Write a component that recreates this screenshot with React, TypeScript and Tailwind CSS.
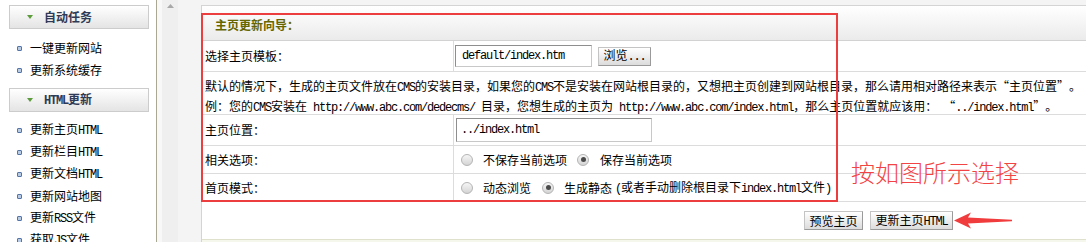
import React from 'react';

// latin runs: the page was drawn with a half-width font, 6px per char
const L = ({ children }: { children: React.ReactNode }) => (
  <span className="font-['Liberation_Mono'] tracking-[-1.2px]">{children}</span>
);

const Q = ({ children, right }: { children: React.ReactNode; right?: boolean }) => (
  <span className={`inline-block w-[12px] ${right ? 'text-left' : 'text-right'}`}>{children}</span>
);

const SideHead = ({ children, top }: { children: React.ReactNode; top: string }) => (
  <div
    className={`${top} ml-[9px] w-[140px] h-[24px] border border-[#cccccc] bg-linear-to-b from-white to-[#e4e4e4] flex items-center`}
  >
    <svg width="6" height="4" viewBox="0 0 6 4" className="ml-[17px]">
      <path d="M0 0 L6 0 L3 4 Z" fill="#5c9c3c" />
    </svg>
    <span className="ml-[11px] font-bold text-[#2e3a56]">{children}</span>
  </div>
);

const Item = ({ children }: { children: React.ReactNode }) => (
  <li className="flex items-center h-[22px] pl-[17px]">
    <span className="w-[5px] h-[5px] rounded-[1px] border border-[#5674a4] bg-[#b8cce8] mr-[8px]" />
    <span>{children}</span>
  </li>
);

const Radio = ({ checked }: { checked?: boolean }) => (
  <span className="w-[12px] h-[12px] rounded-full border border-[#b4b4b4] bg-linear-to-b from-[#f6f6f6] to-[#d4d4d4] flex items-center justify-center shrink-0">
    {checked && <span className="w-[5px] h-[5px] rounded-full bg-[#4a4a4a]" />}
  </span>
);

const Btn = ({ children, className = '' }: { children: React.ReactNode; className?: string }) => (
  <button
    className={`h-[19px] px-[4px] border border-[#c4c4c4] border-r-[#9a9a9a] border-b-[#9a9a9a] bg-linear-to-b from-white to-[#dcdcdc] text-black leading-none ${className}`}
  >
    {children}
  </button>
);

const Row = ({ label, h, children }: { label: React.ReactNode; h: string; children: React.ReactNode }) => (
  <div className={`flex ${h} border-b border-[#dcdcdc]`}>
    <div className="w-[252px] shrink-0 border-r border-[#dcdcdc] pl-[3px] flex items-center">{label}</div>
    <div className="flex-1 flex items-center">{children}</div>
  </div>
);

export default function App() {
  return (
    <div className="relative w-[1086px] h-[242px] overflow-hidden flex bg-white text-[12px] leading-[18px] text-black font-['Noto_Sans_CJK_SC',sans-serif]">
      {/* left menu */}
      <div className="w-[157px] shrink-0 border-r border-[#a9a993] bg-white">
        <SideHead top="mt-[5px]">自动任务</SideHead>
        <ul className="mt-[8px]">
          <Item>一键更新网站</Item>
          <Item>更新系统缓存</Item>
        </ul>
        <SideHead top="mt-[7px]">
          <L>HTML</L>更新
        </SideHead>
        <ul className="mt-[7px]">
          <Item>
            更新主页<L>HTML</L>
          </Item>
          <Item>
            更新栏目<L>HTML</L>
          </Item>
          <Item>
            更新文档<L>HTML</L>
          </Item>
          <Item>更新网站地图</Item>
          <Item>
            更新<L>RSS</L>文件
          </Item>
          <Item>
            获取<L>JS</L>文件
          </Item>
        </ul>
      </div>

      {/* splitter strip */}
      <div className="w-[5px] shrink-0 bg-[#f8f8f8]" />
      <div className="w-[16px] shrink-0 bg-[#efefef] flex justify-center pt-[4px]">
        <svg width="7" height="4" viewBox="0 0 7 4">
          <path d="M0 4 L3.5 0 L7 4 Z" fill="#a8a8a8" />
        </svg>
      </div>
      <div className="w-[23px] shrink-0 bg-[#f4f4f4]" />

      {/* main */}
      <div className="flex-1 bg-[#f4f4f4] pt-[5px] min-w-0">
        <div className="bg-white border-t border-l border-[#d4d4d4] w-[1200px]">
          <div className="h-[35px] border-b border-[#d2d2d2] bg-linear-to-b from-white to-[#ebebeb] flex items-center pl-[13px] pt-[3px]">
            <span className="font-bold text-[#666600]">主页更新向导：</span>
          </div>

          <Row h="h-[31px]" label="选择主页模板：">
            <div className="ml-[1px] w-[137px] h-[22px] border border-[#c8c8c8] border-t-[#8e8e8e] border-l-[#8e8e8e] pl-[6px] flex items-center">
              <L>default/index.htm</L>
            </div>
            <Btn className="ml-[6px] w-[53px]">
              浏览<L>...</L>
            </Btn>
          </Row>

          <div className="h-[43px] border-b border-[#dcdcdc] pl-[3px] pt-[5px] whitespace-nowrap">
            <div>
              默认的情况下，生成的主页文件放在<L>CMS</L>的安装目录，如果您的<L>CMS</L>
              不是安装在网站根目录的，又想把主页创建到网站根目录，那么请用相对路径来表示<Q>“</Q>主页位置<Q right>”</Q>。
            </div>
            <div>
              例：您的<L>CMS</L>安装在<L> http://www.abc.com/dedecms/ </L>目录，您想生成的主页为
              <L> http://www.abc.com/index.html</L>，那么主页位置就应该用：<L>  </L>
              <Q>“</Q>
              <L>../index.html</L>
              <Q right>”</Q>。
            </div>
          </div>

          <Row h="h-[31px]" label="主页位置：">
            <div className="ml-[2px] w-[196px] h-[24px] border border-[#c8c8c8] border-t-[#8e8e8e] border-l-[#8e8e8e] pl-[4px] flex items-center">
              <L>../index.html</L>
            </div>
          </Row>

          <Row h="h-[28px]" label="相关选项：">
            <span className="ml-[7px]">
              <Radio />
            </span>
            <span className="ml-[10px]">不保存当前选项</span>
            <span className="ml-[10px]">
              <Radio checked />
            </span>
            <span className="ml-[11px]">保存当前选项</span>
          </Row>

          <Row h="h-[28px]" label="首页模式：">
            <span className="ml-[7px]">
              <Radio />
            </span>
            <span className="ml-[10px]">动态浏览</span>
            <span className="ml-[11px]">
              <Radio checked />
            </span>
            <span className="ml-[10px]">生成静态</span>
            <span className="ml-[3px]">
              <L>(</L>或者手动删除根目录下<L>index.html</L>文件<L>)</L>
            </span>
          </Row>

          <div className="h-[37px] flex items-center pl-[602px] gap-[7px]">
            <Btn className="w-[59px]">预览主页</Btn>
            <Btn className="w-[83px]">
              更新主页<L>HTML</L>
            </Btn>
          </div>
          <div className="h-[10px] border-t border-[#dfe1cc] bg-[#f6f7ec]" />
        </div>
      </div>

      {/* annotations drawn over the screenshot */}
      <div className="absolute left-[201px] top-[13px] w-[637px] h-[189px] border-2 border-[#ec3e3e] pointer-events-none" />
      <div className="absolute left-[851px] top-[159px] text-[24px] leading-[26px] font-light text-[#f24444]">
        按如图所示选择
      </div>
      <svg
        className="absolute left-[954px] top-[212px]"
        width="58"
        height="17"
        viewBox="0 0 58 17"
      >
        <path d="M0 8.5 L17 0.5 L14 5.5 L58 7.8 L58 9.2 L14 11.5 L17 16.5 Z" fill="#f03c3c" />
      </svg>
    </div>
  );
}
